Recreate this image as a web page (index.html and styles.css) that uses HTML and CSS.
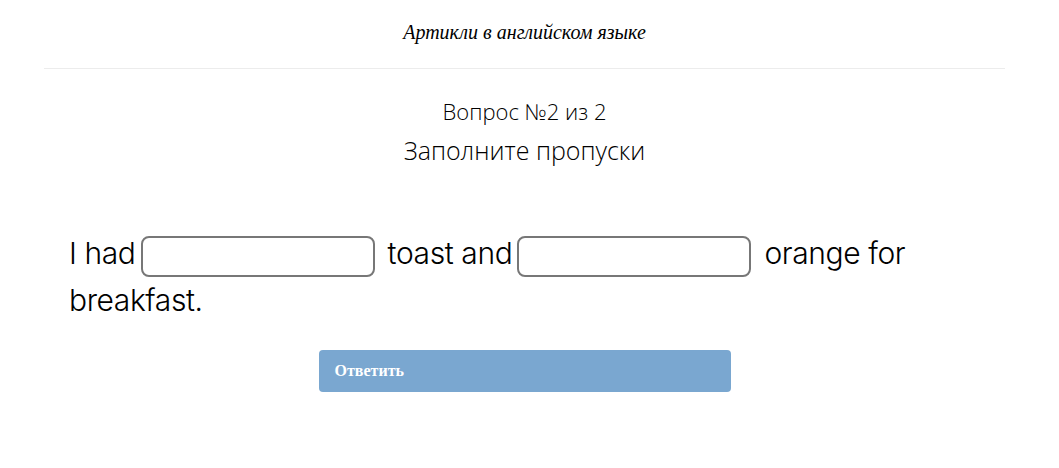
FILE: index.html
```html
<!DOCTYPE html>
<html lang="ru">
<head>
<meta charset="utf-8">
<title>Артикли в английском языке</title>
<link rel="stylesheet" href="styles.css">
</head>
<body>
<div class="page">
  <header class="head">
    <h1 class="title">Артикли в английском языке</h1>
  </header>
  <section class="quiz">
    <div class="counter">Вопрос №2 из 2</div>
    <div class="task">Заполните пропуски</div>
    <p class="sentence">I had <input class="gap" type="text"> toast and <input class="gap" type="text"> orange for breakfast.</p>
    <div class="actions">
      <button class="answer" type="button">Ответить</button>
    </div>
  </section>
</div>
</body>
</html>
```
FILE: styles.css
```css
html, body {
  margin: 0;
  padding: 0;
  background: #fff;
}
.page {
  margin: 0 54px 0 44px;
}
.head {
  border-bottom: 1px solid #ececec;
  height: 68px;
  display: flex;
  justify-content: center;
}
.title {
  margin: 20px 0 0;
  font-family: "Liberation Serif", "Times New Roman", serif;
  font-style: italic;
  font-weight: normal;
  font-size: 20px;
  line-height: 24px;
  color: #000;
}
.quiz {
  display: flex;
  flex-direction: column;
  align-items: center;
}
.counter {
  margin-top: 26px;
  font-family: "Open Sans", sans-serif;
  font-weight: 300;
  font-size: 22px;
  line-height: 32px;
  color: #000;
}
.task {
  margin-top: 7px;
  font-family: "Open Sans", sans-serif;
  font-weight: 300;
  font-size: 25px;
  line-height: 32px;
  color: #000;
}
.sentence {
  align-self: stretch;
  margin: 64px 14px 0 25px;
  font-family: Inter, "Noto Sans", sans-serif;
  font-weight: 300;
  font-size: 30px;
  line-height: 47px;
  letter-spacing: -0.4px;
  color: #000;
}
.gap {
  box-sizing: border-box;
  width: 234px;
  height: 41px;
  border: 2px solid #777;
  border-radius: 8px;
  vertical-align: 1px;
  background: #fff;
  margin: 0 5px 0 -3px;
  padding: 0 8px;
  font-size: 20px;
}
.actions {
  margin-top: 26px;
  display: flex;
  justify-content: center;
}
.answer {
  width: 412px;
  height: 42px;
  border: none;
  border-radius: 4px;
  background: #7aa7d0;
  color: #fff;
  font-family: "Liberation Serif", "Times New Roman", serif;
  font-weight: bold;
  font-size: 16px;
  text-align: left;
  padding: 0 16px;
}
```
